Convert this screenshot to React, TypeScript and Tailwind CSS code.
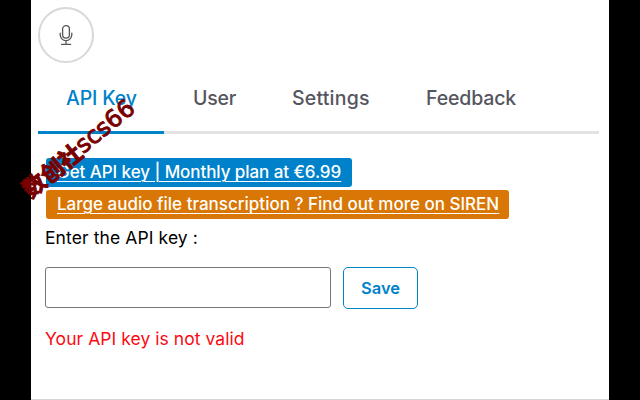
const tabs = [
  { label: 'API Key', className: 'ml-[28px] w-[127px] tracking-[-0.15px] text-[#0082ca]' },
  { label: 'User', className: 'w-[99px] tracking-[-0.2px] text-[#55555e]' },
  { label: 'Settings', className: 'w-[134px] tracking-[0.2px] text-[#55555e]' },
  { label: 'Feedback', className: 'tracking-[-0.15px] text-[#55555e]' },
];

function MicButton() {
  return (
    <button className="flex h-14 w-14 items-center justify-center rounded-full border-2 border-[#d8d8d8]">
      <svg width="16" height="22" viewBox="0 0 16 22" fill="none" stroke="#55555b" strokeWidth="1.3" strokeLinecap="round">
        <rect x="4.6" y="1.6" width="6.8" height="12.6" rx="3.4" />
        <path d="M2.2 9.2v1.6a5.8 5.8 0 0 0 11.6 0V9.2M8 16.7v3.7M3.6 20.4h9" />
      </svg>
    </button>
  );
}

export default function App() {
  return (
    <div className="relative h-[400px] w-[640px] overflow-hidden bg-black font-['Inter','Liberation_Sans',sans-serif]">
      <main className="ml-[31px] flex h-[400px] w-[578px] flex-col bg-white pt-[7px]">
        <div className="pl-[7px]">
          <MicButton />
        </div>

        {/* Tabs */}
        <nav className="mr-[10px] ml-[7px] mt-[20px] flex h-[48px] text-[19.5px] leading-[30px] font-[550]">
          {tabs.map((tab) => (
            <button key={tab.label} className={`h-[30px] shrink-0 text-left ${tab.className}`}>
              {tab.label}
            </button>
          ))}
        </nav>
        <div className="mr-[10px] ml-[7px] h-[3px] shrink-0 bg-[#e3e3e3]">
          <div className="h-[3px] w-[126px] bg-[#0082ca]" />
        </div>

        {/* Promo links */}
        <div className="mt-[24px] ml-[15px] flex flex-col items-start gap-[3px] text-[17px] leading-[29px] font-[550] text-white underline decoration-1 underline-offset-[3px]">
          <a className="h-[29px] w-[306px] rounded-[3px] bg-[#0082ca] pl-[11px] tracking-[-0.07px] whitespace-nowrap">Get API key | Monthly plan at €6.99</a>
          <a className="h-[29px] w-[463px] rounded-[3px] bg-[#d97706] pl-[11px] whitespace-nowrap">Large audio file transcription ? Find out more on SIREN</a>
        </div>

        {/* Key form */}
        <div className="ml-[14px] text-[17.5px]">
          <label className="mt-[6px] block leading-[26px] tracking-[0.1px] text-black">Enter the API key :</label>
          <div className="mt-[16px] flex gap-[12px]">
            <input className="h-[41px] w-[286px] rounded-[3px] border border-[#767676] bg-white" />
            <button className="h-[42px] w-[75px] rounded-[5px] border border-[#0082ca] text-[16.5px] font-semibold text-[#0082ca]">
              Save
            </button>
          </div>
          <p className="mt-[17px] leading-[26px] tracking-[0.05px] text-[#fb0a14]">Your API key is not valid</p>
        </div>
        <div className="mt-auto h-px shrink-0 bg-[#d3d8d6]" />
      </main>

      <div className="absolute top-[134px] left-[8px] flex w-[140px] -rotate-[39deg] items-center justify-center text-[23px] leading-[28px] whitespace-nowrap text-[#780000]">
        <span className="font-['Noto_Sans_CJK_SC',sans-serif] font-bold [-webkit-text-stroke:1px_#780000]">数创社</span>
        <span className="font-['DejaVu_Sans',sans-serif] text-[24px] [-webkit-text-stroke:0.9px_#780000]">scs66</span>
      </div>
    </div>
  );
}
